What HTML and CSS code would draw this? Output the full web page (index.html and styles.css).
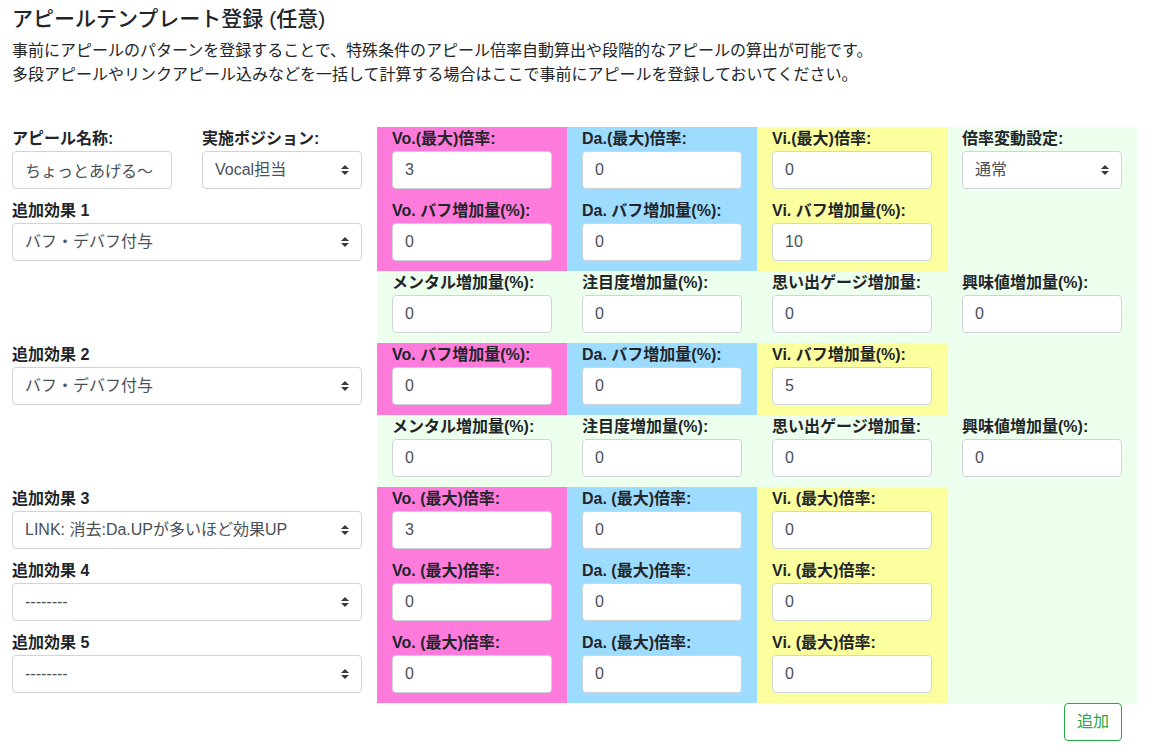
FILE: index.html
```html
<!DOCTYPE html>
<html lang="ja">
<head>
<meta charset="utf-8">
<meta name="viewport" content="width=device-width, initial-scale=1">
<title>アピールテンプレート登録</title>
<link rel="stylesheet" href="styles.css">
</head>
<body>
<main class="page">
  <h1 class="title">アピールテンプレート登録 (任意)</h1>
  <p class="lead">事前にアピールのパターンを登録することで、特殊条件のアピール倍率自動算出や段階的なアピールの算出が可能です。<br>多段アピールやリンクアピール込みなどを一括して計算する場合はここで事前にアピールを登録しておいてください。</p>
  <form class="template-form">
    <div class="row">
      <div class="cell"><label for="name">アピール名称:</label><input class="control" id="name" type="text" value="ちょっとあげる～"></div>
      <div class="cell"><label for="position">実施ポジション:</label><select class="control select" id="position"><option>Vocal担当</option></select></div>
      <div class="cell vo"><label for="vo0">Vo.(最大)倍率:</label><input class="control" id="vo0" type="text" value="3"></div>
      <div class="cell da"><label for="da0">Da.(最大)倍率:</label><input class="control" id="da0" type="text" value="0"></div>
      <div class="cell vi"><label for="vi0">Vi.(最大)倍率:</label><input class="control" id="vi0" type="text" value="0"></div>
      <div class="cell other"><label for="variation">倍率変動設定:</label><select class="control select" id="variation"><option>通常</option></select></div>
    </div>

    <div class="row">
      <div class="cell wide"><label for="effect1">追加効果 1</label><select class="control select" id="effect1"><option>バフ・デバフ付与</option></select></div>
      <div class="cell vo"><label for="vo1">Vo. バフ増加量(%):</label><input class="control" id="vo1" type="text" value="0"></div>
      <div class="cell da"><label for="da1">Da. バフ増加量(%):</label><input class="control" id="da1" type="text" value="0"></div>
      <div class="cell vi"><label for="vi1">Vi. バフ増加量(%):</label><input class="control" id="vi1" type="text" value="10"></div>
      <div class="cell other"></div>
    </div>
    <div class="row">
      <div class="cell wide"></div>
      <div class="cell other"><label for="mental1">メンタル増加量(%):</label><input class="control" id="mental1" type="text" value="0"></div>
      <div class="cell other"><label for="attention1">注目度増加量(%):</label><input class="control" id="attention1" type="text" value="0"></div>
      <div class="cell other"><label for="memory1">思い出ゲージ増加量:</label><input class="control" id="memory1" type="text" value="0"></div>
      <div class="cell other"><label for="interest1">興味値増加量(%):</label><input class="control" id="interest1" type="text" value="0"></div>
    </div>

    <div class="row">
      <div class="cell wide"><label for="effect2">追加効果 2</label><select class="control select" id="effect2"><option>バフ・デバフ付与</option></select></div>
      <div class="cell vo"><label for="vo2">Vo. バフ増加量(%):</label><input class="control" id="vo2" type="text" value="0"></div>
      <div class="cell da"><label for="da2">Da. バフ増加量(%):</label><input class="control" id="da2" type="text" value="0"></div>
      <div class="cell vi"><label for="vi2">Vi. バフ増加量(%):</label><input class="control" id="vi2" type="text" value="5"></div>
      <div class="cell other"></div>
    </div>
    <div class="row">
      <div class="cell wide"></div>
      <div class="cell other"><label for="mental2">メンタル増加量(%):</label><input class="control" id="mental2" type="text" value="0"></div>
      <div class="cell other"><label for="attention2">注目度増加量(%):</label><input class="control" id="attention2" type="text" value="0"></div>
      <div class="cell other"><label for="memory2">思い出ゲージ増加量:</label><input class="control" id="memory2" type="text" value="0"></div>
      <div class="cell other"><label for="interest2">興味値増加量(%):</label><input class="control" id="interest2" type="text" value="0"></div>
    </div>

    <div class="row">
      <div class="cell wide"><label for="effect3">追加効果 3</label><select class="control select" id="effect3"><option>LINK: 消去:Da.UPが多いほど効果UP</option></select></div>
      <div class="cell vo"><label for="vo3">Vo. (最大)倍率:</label><input class="control" id="vo3" type="text" value="3"></div>
      <div class="cell da"><label for="da3">Da. (最大)倍率:</label><input class="control" id="da3" type="text" value="0"></div>
      <div class="cell vi"><label for="vi3">Vi. (最大)倍率:</label><input class="control" id="vi3" type="text" value="0"></div>
      <div class="cell other"></div>
    </div>
    <div class="row">
      <div class="cell wide"><label for="effect4">追加効果 4</label><select class="control select" id="effect4"><option>--------</option></select></div>
      <div class="cell vo"><label for="vo4">Vo. (最大)倍率:</label><input class="control" id="vo4" type="text" value="0"></div>
      <div class="cell da"><label for="da4">Da. (最大)倍率:</label><input class="control" id="da4" type="text" value="0"></div>
      <div class="cell vi"><label for="vi4">Vi. (最大)倍率:</label><input class="control" id="vi4" type="text" value="0"></div>
      <div class="cell other"></div>
    </div>
    <div class="row">
      <div class="cell wide"><label for="effect5">追加効果 5</label><select class="control select" id="effect5"><option>--------</option></select></div>
      <div class="cell vo"><label for="vo5">Vo. (最大)倍率:</label><input class="control" id="vo5" type="text" value="0"></div>
      <div class="cell da"><label for="da5">Da. (最大)倍率:</label><input class="control" id="da5" type="text" value="0"></div>
      <div class="cell vi"><label for="vi5">Vi. (最大)倍率:</label><input class="control" id="vi5" type="text" value="0"></div>
      <div class="cell other"></div>
    </div>

    <div class="actions"><button class="add-button" type="button">追加</button></div>
  </form>
</main>
</body>
</html>
```

FILE: styles.css
```css
*,
*::before,
*::after {
  box-sizing: border-box;
}

body {
  margin: 0;
  background: #fff;
  color: #212529;
  font-family: "Liberation Sans", "Noto Sans CJK JP", sans-serif;
  font-size: 16px;
  line-height: 24px;
}

.page {
  padding: 7px 23px 14px 12px;
}

.title {
  margin: 0 0 8px;
  font-size: 21px;
  font-weight: 500;
  line-height: 24px;
}

.lead {
  margin: 0 0 40px;
}

.template-form {
  margin-left: -15px;
}

.row {
  display: grid;
  grid-template-columns: repeat(6, minmax(0, 1fr));
}

.cell {
  display: flex;
  flex-direction: column;
  padding: 0 15px 10px;
}

.wide {
  grid-column: span 2;
}

.vo {
  background: #ff7bdb;
}

.da {
  background: #9edcff;
}

.vi {
  background: #fcff9e;
}

.other {
  background: #edffed;
}

label {
  height: 24px;
  font-weight: 700;
  white-space: nowrap;
}

.control {
  width: 100%;
  height: 38px;
  margin: 0;
  padding: 6px 12px;
  border: 1px solid #ced4da;
  border-radius: 4px;
  background: #fff;
  color: #495057;
  font-family: inherit;
  font-size: 16px;
  line-height: 24px;
}

.select {
  padding-right: 28px;
  appearance: none;
  background: #fff url("data:image/svg+xml,%3Csvg xmlns='http://www.w3.org/2000/svg' width='4' height='5' viewBox='0 0 4 5'%3E%3Cpath fill='%23343a40' d='M2 0L0 2h4zm0 5L0 3h4z'/%3E%3C/svg%3E") no-repeat right 12px center / 8px 10px;
}

.actions {
  display: flex;
  justify-content: flex-end;
  padding: 0 15px;
}

.add-button {
  padding: 6px 12px;
  border: 1px solid #28a745;
  border-radius: 4px;
  background: transparent;
  color: #28a745;
  font-family: inherit;
  font-size: 16px;
  line-height: 24px;
  cursor: pointer;
}
```
